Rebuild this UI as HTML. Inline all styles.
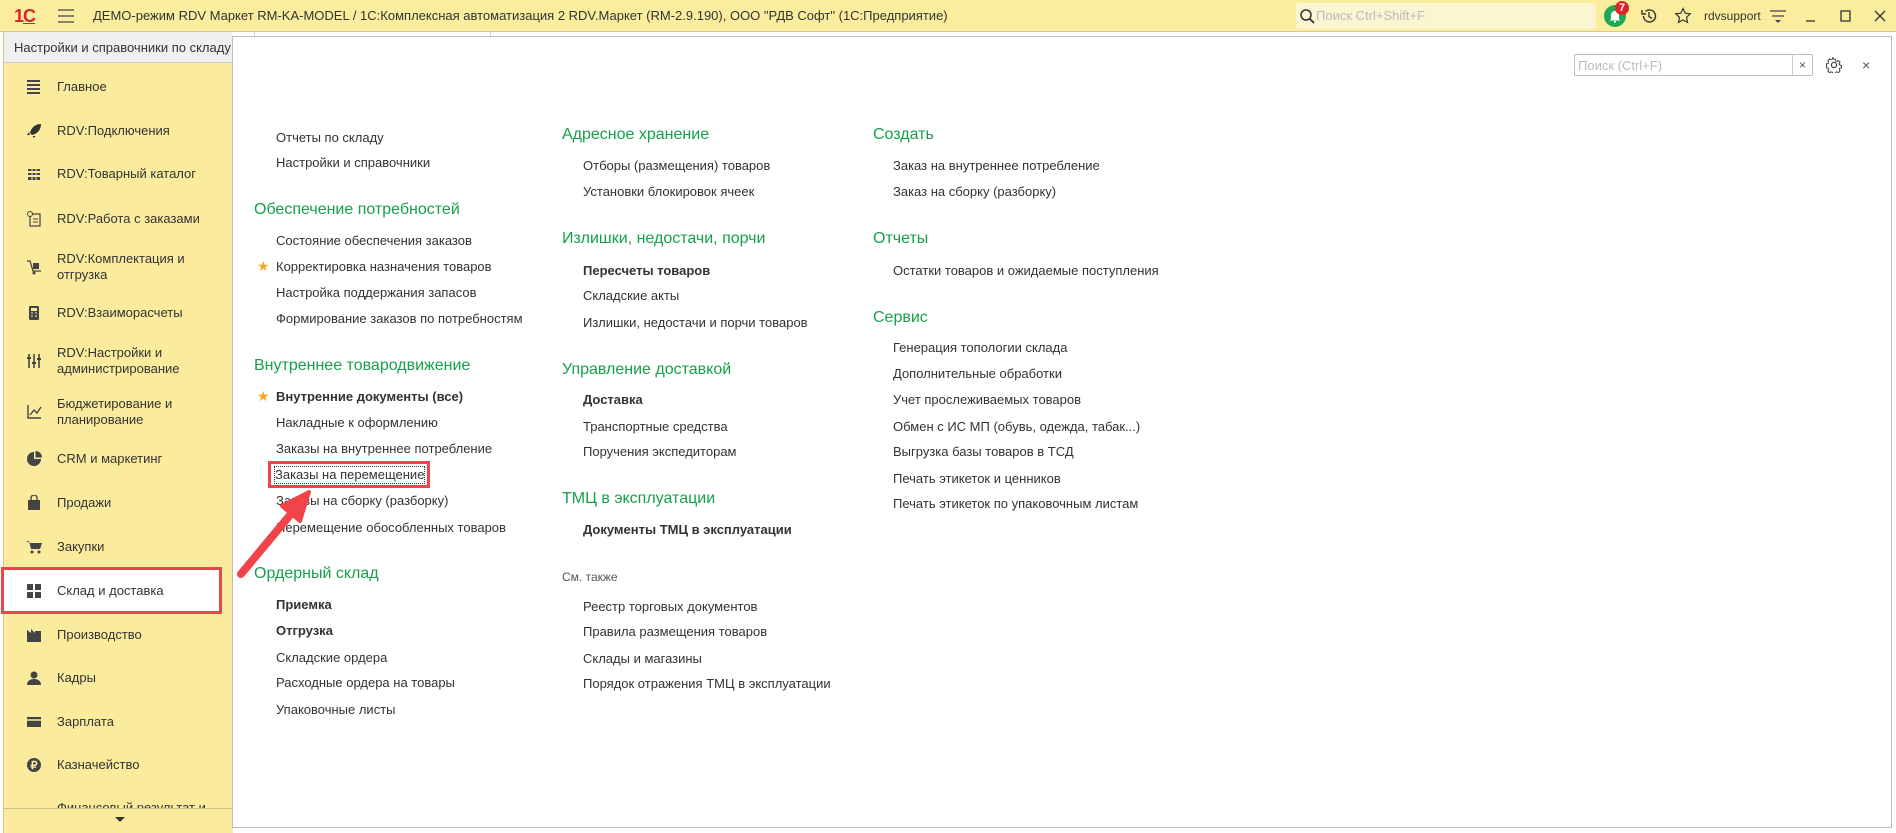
<!DOCTYPE html>
<html><head><meta charset="utf-8">
<style>
*{margin:0;padding:0;box-sizing:border-box}
body{width:1896px;height:833px;position:relative;overflow:hidden;background:#fff;font-family:"Liberation Sans",Arial,sans-serif;font-size:13px;color:#333}
.a{position:absolute;white-space:nowrap;line-height:16px}
#top{position:absolute;left:0;top:0;width:1896px;height:32px;background:#fbed9e;border-bottom:1px solid #d8c98a}
#tabs{position:absolute;left:0;top:32px;width:1896px;height:31px;background:#fff}
#side{position:absolute;left:3px;top:63px;width:229px;height:770px;background:#fbeb9d;border-left:1px solid #d6c98f}
.si{position:absolute;left:53px;line-height:16px;font-size:13px;color:#333}
.ic{position:absolute;left:22px;width:16px;height:16px}
#panel{position:absolute;left:232px;top:36px;width:1660px;height:792px;border:1px solid #bdbdbd;border-right:1px solid #bbb;background:#fff}
.h{position:absolute;white-space:nowrap;color:#16a04a;font-size:16px;line-height:18px}
.b{font-weight:bold}
</style></head><body>
<div id="top">
 <div class="a" style="left:14px;top:6px;color:#d6262a;font-weight:bold;font-size:18px;line-height:20px;letter-spacing:-1px">1<span style="text-decoration:underline">С</span></div>
 <svg class="a" style="left:58px;top:9px" width="16" height="14"><path d="M0 1H16M0 7H16M0 13H16" stroke="#444" stroke-width="1.3"/></svg>
 <div class="a" style="left:93px;top:8px;color:#333">ДЕМО-режим RDV Маркет RM-KA-MODEL / 1С:Комплексная автоматизация 2 RDV.Маркет (RM-2.9.190), ООО "РДВ Софт"  (1С:Предприятие)</div>
 <div class="a" style="left:1296px;top:3px;width:300px;height:26px;background:#fbf5d2;border-radius:3px"></div>
 <svg class="a" style="left:1299px;top:8px" width="16" height="16"><circle cx="7" cy="7" r="5" fill="none" stroke="#333" stroke-width="1.5"/><path d="M11 11L15 15" stroke="#333" stroke-width="1.8"/></svg>
 <div class="a" style="left:1316px;top:8px;color:#bbb">Поиск Ctrl+Shift+F</div>
 <div class="a" style="left:1604px;top:5px;width:22px;height:22px;border-radius:50%;background:#1fa855"></div>
 <svg class="a" style="left:1608px;top:9px" width="14" height="14"><path d="M3 10V6a4 4 0 0 1 8 0v4l1.5 1.5h-11z M6 12h2v1.5H6z" fill="#fff"/></svg>
 <div class="a" style="left:1615px;top:1px;width:14px;height:14px;border-radius:50%;background:#e52129;color:#fff;font-size:11px;line-height:14px;text-align:center;font-weight:bold">7</div>
 <svg class="a" style="left:1640px;top:7px" width="18" height="18"><path d="M3.5 9a6 6 0 1 0 2-4.5" fill="none" stroke="#333" stroke-width="1.4"/><path d="M2 3v4h4" fill="none" stroke="#333" stroke-width="1.4"/><path d="M9 5v4.5l3 2" fill="none" stroke="#333" stroke-width="1.4"/></svg>
 <svg class="a" style="left:1674px;top:7px" width="18" height="18"><path d="M9 1.5l2.2 4.7 5.1.6-3.8 3.5 1 5.1L9 12.9 4.5 15.4l1-5.1L1.7 6.8l5.1-.6z" fill="none" stroke="#333" stroke-width="1.2"/></svg>
 <div class="a" style="left:1704px;top:8px;color:#333;font-size:12px">rdvsupport</div>
 <svg class="a" style="left:1769px;top:8px" width="18" height="18"><path d="M1 3H17M3 8H15" stroke="#444" stroke-width="1.3"/><path d="M6 12h6l-3 3z" fill="#444"/></svg>
 <svg class="a" style="left:1803px;top:8px" width="16" height="16"><path d="M3 13H12" stroke="#333" stroke-width="1.3"/></svg>
 <svg class="a" style="left:1838px;top:8px" width="16" height="16"><rect x="3" y="3" width="9" height="10" fill="none" stroke="#333" stroke-width="1.3"/></svg>
 <svg class="a" style="left:1872px;top:8px" width="16" height="16"><path d="M3 3L13 13M13 3L3 13" stroke="#333" stroke-width="1.3"/></svg>
</div>
<div id="tabs">
 <div class="a" style="left:3px;top:0;width:229px;height:31px;background:#f0f0f0;border-left:1px solid #d6c98f;border-bottom:1px solid #ccc"></div>
 <div class="a" style="left:14px;top:8px;color:#333">Настройки и справочники по складу</div>
 <div class="a" style="left:254px;top:0;width:1px;height:4px;background:#ccc"></div>
 <div class="a" style="left:490px;top:0;width:1px;height:4px;background:#ccc"></div>
</div>
<div id="side">
 <svg class="ic" style="top:16px" width="16" height="16"><path d="M1 2H14M1 6H14M1 10H14M1 14H14" stroke="#444" stroke-width="2"/></svg>
 <div class="si" style="top:16px">Главное</div>
 <svg class="ic" style="top:60px" width="16" height="16"><path d="M15 1C9 1 5 5 4 10l2 2c5-1 9-5 9-11zM3 9L1 12h3zM7 13l0 2 3-2z" fill="#333"/></svg>
 <div class="si" style="top:60px">RDV:Подключения</div>
 <svg class="ic" style="top:103px" width="16" height="16"><path d="M2 3h12v2H2zM2 7h12v2H2zM2 11h12v3H2z" fill="#444"/><path d="M6 3v11M10 3v11" stroke="#fbeb9d" stroke-width="1"/></svg>
 <div class="si" style="top:103px">RDV:Товарный каталог</div>
 <svg class="ic" style="top:148px" width="16" height="16"><rect x="4" y="3" width="10" height="12" fill="none" stroke="#444" stroke-width="1.2"/><circle cx="4" cy="3" r="2.5" fill="#fbeb9d" stroke="#444"/><path d="M7 8H12M7 11H12" stroke="#444"/></svg>
 <div class="si" style="top:148px">RDV:Работа с заказами</div>
 <svg class="ic" style="top:196px" width="16" height="16"><path d="M1 2h3l3 10h8" fill="none" stroke="#444" stroke-width="1.3"/><rect x="7" y="4" width="6" height="6" fill="#444"/><circle cx="8" cy="14" r="1.5" fill="#444"/></svg>
 <div class="si" style="top:188px">RDV:Комплектация и<br>отгрузка</div>
 <svg class="ic" style="top:242px" width="16" height="16"><rect x="3" y="1" width="10" height="14" rx="1" fill="#444"/><rect x="5" y="3" width="6" height="3" fill="#fbeb9d"/><path d="M5 8h2M9 8h2M5 11h2M9 11h2" stroke="#fbeb9d"/></svg>
 <div class="si" style="top:242px">RDV:Взаиморасчеты</div>
 <svg class="ic" style="top:290px" width="16" height="16"><path d="M3 1V15M8 1V15M13 1V15" stroke="#444" stroke-width="1.6"/><path d="M1 5H5M6 10H10M11 6H15" stroke="#444" stroke-width="2"/></svg>
 <div class="si" style="top:282px">RDV:Настройки и<br>администрирование</div>
 <svg class="ic" style="top:341px" width="16" height="16"><path d="M2 1V14H15" fill="none" stroke="#444" stroke-width="1.4"/><path d="M4 11L8 6l3 3 4-6" fill="none" stroke="#444" stroke-width="1.4"/></svg>
 <div class="si" style="top:333px">Бюджетирование и<br>планирование</div>
 <svg class="ic" style="top:388px" width="16" height="16"><path d="M8 1a7 7 0 1 0 7 7H8z" fill="#444"/><path d="M9.5 0v6.5H16A6.5 6.5 0 0 0 9.5 0z" fill="#444"/></svg>
 <div class="si" style="top:388px">CRM и маркетинг</div>
 <svg class="ic" style="top:432px" width="16" height="16"><path d="M2 5h12v10H2z" fill="#444"/><path d="M5 6V3a3 3 0 0 1 6 0v3" fill="none" stroke="#444" stroke-width="1.4"/></svg>
 <div class="si" style="top:432px">Продажи</div>
 <svg class="ic" style="top:476px" width="16" height="16"><path d="M0 2h3l2 8h9l2-6H4" fill="#444"/><circle cx="6" cy="13" r="1.5" fill="#444"/><circle cx="13" cy="13" r="1.5" fill="#444"/></svg>
 <div class="si" style="top:476px">Закупки</div>
 <div class="a" style="left:-3px;top:504px;width:221px;height:47px;background:#fff;border:3px solid #f0434a"></div>
 <svg class="ic" style="top:520px" width="16" height="16"><path d="M1 1h6v6H1zM9 1h6v6H9zM1 9h6v6H1zM9 9h6v6H9z" fill="#444"/></svg>
 <div class="si" style="top:520px">Склад и доставка</div>
 <svg class="ic" style="top:564px" width="16" height="16"><path d="M1 15V3l4 3V2l4 4V4h6v11z" fill="#444"/></svg>
 <div class="si" style="top:564px">Производство</div>
 <svg class="ic" style="top:607px" width="16" height="16"><circle cx="8" cy="5" r="3.5" fill="#444"/><path d="M1 15c0-4 3-6 7-6s7 2 7 6z" fill="#444"/></svg>
 <div class="si" style="top:607px">Кадры</div>
 <svg class="ic" style="top:651px" width="16" height="16"><rect x="1" y="3" width="14" height="10" fill="#444"/><path d="M1 6H15" stroke="#fbeb9d" stroke-width="1.5"/></svg>
 <div class="si" style="top:651px">Зарплата</div>
 <svg class="ic" style="top:694px" width="16" height="16"><circle cx="8" cy="8" r="7" fill="#444"/><text x="8" y="12" font-size="11" font-weight="bold" fill="#fbeb9d" text-anchor="middle" font-family="Liberation Sans">₽</text></svg>
 <div class="si" style="top:694px">Казначейство</div>
 <div class="si" style="top:737px;height:8px;overflow:hidden">Финансовый результат и</div>
 <div class="a" style="left:0;top:745px;width:229px;height:25px;background:#fbeb9d;border-top:1px solid #cfc28a"></div>
 <svg class="a" style="left:110px;top:753px" width="12" height="8"><path d="M1 1h10L6 6z" fill="#333"/></svg>
</div>
<div id="panel"></div>
<div class="a" style="left:1574px;top:54px;width:239px;height:22px;border:1px solid #bbb;border-radius:2px;background:#fff"></div>
<div class="a" style="left:1792px;top:54px;width:1px;height:22px;background:#ccc"></div>
<div class="a" style="left:1578px;top:58px;color:#bbb">Поиск (Ctrl+F)</div>
<div class="a" style="left:1799px;top:57px;color:#555;font-size:12px">×</div>
<svg class="a" style="left:1826px;top:57px" width="16" height="16"><circle cx="8" cy="8" r="2.6" fill="none" stroke="#444" stroke-width="1.2"/><path d="M8 1.5l1.3.2.4 1.8 1.5.7 1.6-1 1.8 1.8-1 1.6.7 1.5 1.8.4v2.6l-1.8.4-.7 1.5 1 1.6-1.8 1.8-1.6-1-1.5.7-.4 1.8H6.7l-.4-1.8-1.5-.7-1.6 1-1.8-1.8 1-1.6-.7-1.5-1.8-.4V6.7l1.8-.4.7-1.5-1-1.6 1.8-1.8 1.6 1 1.5-.7.4-1.8z" fill="none" stroke="#444" stroke-width="1.1" transform="translate(0.6 0.6) scale(0.92)"/></svg>
<div class="a" style="left:1862px;top:57px;color:#555;font-size:14px">×</div>

<!-- column 1 -->
<div class="a" style="left:276px;top:130px">Отчеты по складу</div>
<div class="a" style="left:276px;top:155px">Настройки и справочники</div>
<div class="h" style="left:254px;top:201px">Обеспечение потребностей</div>
<div class="a" style="left:276px;top:233px">Состояние обеспечения заказов</div>
<div class="a" style="left:257px;top:258px;color:#f5a623;font-size:14px">★</div>
<div class="a" style="left:276px;top:259px">Корректировка назначения товаров</div>
<div class="a" style="left:276px;top:285px">Настройка поддержания запасов</div>
<div class="a" style="left:276px;top:311px">Формирование заказов по потребностям</div>
<div class="h" style="left:254px;top:357px">Внутреннее товародвижение</div>
<div class="a" style="left:257px;top:388px;color:#f5a623;font-size:14px">★</div>
<div class="a b" style="left:276px;top:389px">Внутренние документы (все)</div>
<div class="a" style="left:276px;top:415px">Накладные к оформлению</div>
<div class="a" style="left:276px;top:441px">Заказы на внутреннее потребление</div>
<div class="a" style="left:275px;top:467px;outline:1px dotted #333">Заказы на перемещение</div>
<div class="a" style="left:268px;top:461px;width:162px;height:27px;border:3px solid #f0434a"></div>
<div class="a" style="left:276px;top:493px">Заказы на сборку (разборку)</div>
<div class="a" style="left:276px;top:520px">Перемещение обособленных товаров</div>
<div class="h" style="left:254px;top:565px">Ордерный склад</div>
<div class="a b" style="left:276px;top:597px">Приемка</div>
<div class="a b" style="left:276px;top:623px">Отгрузка</div>
<div class="a" style="left:276px;top:650px">Складские ордера</div>
<div class="a" style="left:276px;top:675px">Расходные ордера на товары</div>
<div class="a" style="left:276px;top:702px">Упаковочные листы</div>

<!-- column 2 -->
<div class="h" style="left:562px;top:126px">Адресное хранение</div>
<div class="a" style="left:583px;top:158px">Отборы (размещения) товаров</div>
<div class="a" style="left:583px;top:184px">Установки блокировок ячеек</div>
<div class="h" style="left:562px;top:230px">Излишки, недостачи, порчи</div>
<div class="a b" style="left:583px;top:263px">Пересчеты товаров</div>
<div class="a" style="left:583px;top:288px">Складские акты</div>
<div class="a" style="left:583px;top:315px">Излишки, недостачи и порчи товаров</div>
<div class="h" style="left:562px;top:361px">Управление доставкой</div>
<div class="a b" style="left:583px;top:392px">Доставка</div>
<div class="a" style="left:583px;top:419px">Транспортные средства</div>
<div class="a" style="left:583px;top:444px">Поручения экспедиторам</div>
<div class="h" style="left:562px;top:490px">ТМЦ в эксплуатации</div>
<div class="a b" style="left:583px;top:522px">Документы ТМЦ в эксплуатации</div>
<div class="a" style="left:562px;top:569px;color:#555;font-size:12px">См. также</div>
<div class="a" style="left:583px;top:599px">Реестр торговых документов</div>
<div class="a" style="left:583px;top:624px">Правила размещения товаров</div>
<div class="a" style="left:583px;top:651px">Склады и магазины</div>
<div class="a" style="left:583px;top:676px">Порядок отражения ТМЦ в эксплуатации</div>

<!-- column 3 -->
<div class="h" style="left:873px;top:126px">Создать</div>
<div class="a" style="left:893px;top:158px">Заказ на внутреннее потребление</div>
<div class="a" style="left:893px;top:184px">Заказ на сборку (разборку)</div>
<div class="h" style="left:873px;top:230px">Отчеты</div>
<div class="a" style="left:893px;top:263px">Остатки товаров и ожидаемые поступления</div>
<div class="h" style="left:873px;top:309px">Сервис</div>
<div class="a" style="left:893px;top:340px">Генерация топологии склада</div>
<div class="a" style="left:893px;top:366px">Дополнительные обработки</div>
<div class="a" style="left:893px;top:392px">Учет прослеживаемых товаров</div>
<div class="a" style="left:893px;top:419px">Обмен с ИС МП (обувь, одежда, табак...)</div>
<div class="a" style="left:893px;top:444px">Выгрузка базы товаров в ТСД</div>
<div class="a" style="left:893px;top:471px">Печать этикеток и ценников</div>
<div class="a" style="left:893px;top:496px">Печать этикеток по упаковочным листам</div>

<!-- arrow -->
<svg class="a" style="left:0;top:0" width="400" height="700"><path d="M241 574L296 508" stroke="#f0434a" stroke-width="8" stroke-linecap="round"/><path d="M309 492L282 506L300 521z" fill="#f0434a" stroke="#f0434a" stroke-width="4" stroke-linejoin="round"/></svg>
</body></html>
